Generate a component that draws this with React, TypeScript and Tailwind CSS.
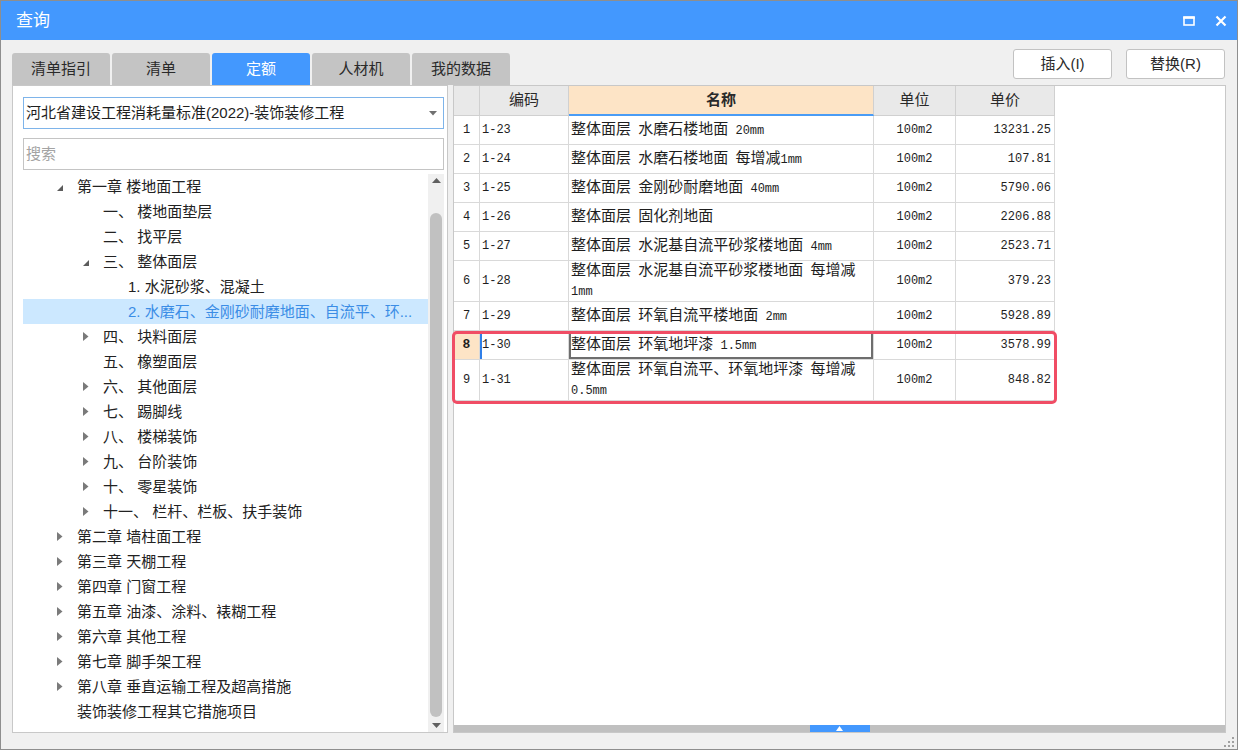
import React from 'react'

type TreeItem = { lvl: number; exp: 'open' | 'closed' | 'none'; text: string; sel?: boolean }

const tree: TreeItem[] = [
  { lvl: 0, exp: 'open', text: '第一章 楼地面工程' },
  { lvl: 1, exp: 'none', text: '一、 楼地面垫层' },
  { lvl: 1, exp: 'none', text: '二、 找平层' },
  { lvl: 1, exp: 'open', text: '三、 整体面层' },
  { lvl: 2, exp: 'none', text: '1. 水泥砂浆、混凝土' },
  { lvl: 2, exp: 'none', text: '2. 水磨石、金刚砂耐磨地面、自流平、环...', sel: true },
  { lvl: 1, exp: 'closed', text: '四、 块料面层' },
  { lvl: 1, exp: 'none', text: '五、 橡塑面层' },
  { lvl: 1, exp: 'closed', text: '六、 其他面层' },
  { lvl: 1, exp: 'closed', text: '七、 踢脚线' },
  { lvl: 1, exp: 'closed', text: '八、 楼梯装饰' },
  { lvl: 1, exp: 'closed', text: '九、 台阶装饰' },
  { lvl: 1, exp: 'closed', text: '十、 零星装饰' },
  { lvl: 1, exp: 'closed', text: '十一、 栏杆、栏板、扶手装饰' },
  { lvl: 0, exp: 'closed', text: '第二章 墙柱面工程' },
  { lvl: 0, exp: 'closed', text: '第三章 天棚工程' },
  { lvl: 0, exp: 'closed', text: '第四章 门窗工程' },
  { lvl: 0, exp: 'closed', text: '第五章 油漆、涂料、裱糊工程' },
  { lvl: 0, exp: 'closed', text: '第六章 其他工程' },
  { lvl: 0, exp: 'closed', text: '第七章 脚手架工程' },
  { lvl: 0, exp: 'closed', text: '第八章 垂直运输工程及超高措施' },
  { lvl: 0, exp: 'none', text: '装饰装修工程其它措施项目' },
]

const indent = ['pl-[33px]', 'pl-[59px]', 'pl-[84px]']

type Row = { n: number; code: string; name: string[]; unit: string; price: string }

const rows: Row[] = [
  { n: 1, code: '1-23', name: ['整体面层 水磨石楼地面 20mm'], unit: '100m2', price: '13231.25' },
  { n: 2, code: '1-24', name: ['整体面层 水磨石楼地面 每增减1mm'], unit: '100m2', price: '107.81' },
  { n: 3, code: '1-25', name: ['整体面层 金刚砂耐磨地面 40mm'], unit: '100m2', price: '5790.06' },
  { n: 4, code: '1-26', name: ['整体面层 固化剂地面'], unit: '100m2', price: '2206.88' },
  { n: 5, code: '1-27', name: ['整体面层 水泥基自流平砂浆楼地面 4mm'], unit: '100m2', price: '2523.71' },
  { n: 6, code: '1-28', name: ['整体面层 水泥基自流平砂浆楼地面 每增减', '1mm'], unit: '100m2', price: '379.23' },
  { n: 7, code: '1-29', name: ['整体面层 环氧自流平楼地面 2mm'], unit: '100m2', price: '5928.89' },
  { n: 8, code: '1-30', name: ['整体面层 环氧地坪漆 1.5mm'], unit: '100m2', price: '3578.99' },
  { n: 9, code: '1-31', name: ['整体面层 环氧自流平、环氧地坪漆 每增减', '0.5mm'], unit: '100m2', price: '848.82' },
]

const mono = "font-['Liberation_Mono','Noto_Sans_CJK_SC',monospace] text-[12px]"

// ascii runs go in the narrow mono face, like the original SimSun digits
function Mixed({ s }: { s: string }) {
  return (
    <>
      {s
        .split(/([\x20-\x7e]+)/)
        .filter(Boolean)
        .map((p, i) =>
          /^[\x20-\x7e]+$/.test(p) ? (
            <span key={i} className={`${mono} whitespace-pre`}>
              {p}
            </span>
          ) : (
            <span key={i}>{p}</span>
          )
        )}
    </>
  )
}

function Arrow({ exp }: { exp: TreeItem['exp'] }) {
  if (exp === 'open')
    return (
      <svg width="8" height="8" viewBox="0 0 8 8" className="mt-[2px]">
        <polygon points="7,1 7,7 1,7" fill="#5c5c5c" />
      </svg>
    )
  if (exp === 'closed')
    return (
      <svg width="6" height="9" viewBox="0 0 6 9" className="ml-[1px]">
        <polygon points="0,0 5.5,4.5 0,9" fill="#7a7a7a" />
      </svg>
    )
  return null
}

function TableRow({ r }: { r: Row }) {
  const two = r.name.length > 1
  const cur = r.n === 8
  const h = two ? 'h-[41px]' : 'h-[29px]'
  return (
    <div className={`grid grid-cols-[26px_89px_305px_82px_99px] ${h} text-[#1e1e1e]`}>
      <div
        className={`flex items-center justify-center border-r border-b border-[#d9d9d9] ${mono} ${
          cur ? 'bg-[#fde4c6] font-bold text-[13px]' : ''
        }`}
      >
        {r.n}
      </div>
      <div
        className={`flex items-center pl-[2px] border-r border-b border-[#d9d9d9] ${mono} ${
          cur ? 'shadow-[inset_2px_0_0_#2f7fe8]' : ''
        }`}
      >
        {r.code}
      </div>
      <div
        className={`flex flex-col justify-center pl-[2px] border-r border-b border-[#d9d9d9] text-[15px] leading-[17px] ${
          cur ? 'ring-2 ring-inset ring-[#6e6e6e]' : ''
        }`}
      >
        {r.name.map((l, i) => (
          <div key={i} className="whitespace-nowrap">
            <Mixed s={l} />
          </div>
        ))}
      </div>
      <div className={`flex items-center justify-center border-r border-b border-[#d9d9d9] ${mono}`}>{r.unit}</div>
      <div className={`flex items-center justify-end pr-[3px] border-r border-b border-[#d9d9d9] ${mono}`}>
        {r.price}
      </div>
    </div>
  )
}

export default function App() {
  return (
    <div className="w-[1238px] h-[750px] flex flex-col border border-[#8e8e8e] bg-[#f0f0f0] overflow-hidden font-['Liberation_Sans','Noto_Sans_CJK_SC',sans-serif] text-[#222]">
      {/* title bar */}
      <div className="h-[39px] shrink-0 bg-[#4398fe] flex items-center justify-between pl-[15px] pr-[10px]">
        <span className="text-white text-[17px]">查询</span>
        <div className="flex items-center gap-[20px]">
          <svg width="12" height="10" viewBox="0 0 12 10">
            <rect x="1" y="1.5" width="10" height="7.5" fill="none" stroke="#fff" strokeWidth="1.6" />
            <rect x="0.2" y="0.2" width="11.6" height="2.6" fill="#fff" />
          </svg>
          <svg width="12" height="12" viewBox="0 0 12 12">
            <path d="M1.5 1.5 L10.5 10.5 M10.5 1.5 L1.5 10.5" stroke="#fff" strokeWidth="2.2" />
          </svg>
        </div>
      </div>

      {/* tabs + buttons */}
      <div className="h-[45px] shrink-0 flex justify-between pl-[11px] pr-[12px] pt-[9px]">
        <div className="flex items-end gap-[2px] self-end">
          {['清单指引', '清单', '定额', '人材机', '我的数据'].map((t) => (
            <div
              key={t}
              className={`w-[98px] h-[32px] rounded-t-[3px] flex items-center justify-center text-[15px] ${
                t === '定额' ? 'bg-[#4398fe] text-white' : 'bg-[#c4c4c4] text-[#2a2a2a]'
              }`}
            >
              {t}
            </div>
          ))}
        </div>
        <div className="flex gap-[14px]">
          {['插入(I)', '替换(R)'].map((b) => (
            <button
              key={b}
              className="w-[99px] h-[30px] bg-white border border-[#c2c2c2] rounded-[3px] text-[15px] text-[#2a2a2a]"
            >
              {b}
            </button>
          ))}
        </div>
      </div>

      {/* panels */}
      <div className="h-[648px] shrink-0 flex gap-[5px] px-[11px]">
        {/* left tree panel */}
        <div className="w-[436px] border border-[#c8c8c8] bg-white flex flex-col pt-[11px] pl-[10px] pr-[3px]">
          <div className="h-[32px] shrink-0 border border-[#7eb4ea] flex items-center justify-between pl-[2px] pr-[6px] text-[15px] text-[#1e1e1e]">
            <span>河北省建设工程消耗量标准(2022)-装饰装修工程</span>
            <svg width="8" height="5" viewBox="0 0 8 5">
              <polygon points="0,0 8,0 4,4.5" fill="#707070" />
            </svg>
          </div>
          <div className="h-[32px] shrink-0 mt-[9px] border border-[#c4c4c4] flex items-center pl-[2px] text-[15px] text-[#a3a3a3]">
            搜索
          </div>
          <div className="flex-1 min-h-0 mt-[4px] flex">
            <div className="flex-1 overflow-hidden">
              {tree.map((t, i) => (
                <div
                  key={i}
                  className={`h-[25px] flex items-center ${indent[t.lvl]} ${
                    t.sel ? 'bg-[#cce8ff] text-[#3b8de6]' : ''
                  }`}
                >
                  <div className="w-[21px] shrink-0 flex items-center">
                    <Arrow exp={t.exp} />
                  </div>
                  <span className="text-[15px] leading-[25px] whitespace-pre">{t.text}</span>
                </div>
              ))}
            </div>
            <div className="w-[16px] shrink-0 bg-[#f0f0f0] flex flex-col items-center">
              <div className="h-[12px] flex items-center">
                <svg width="9" height="5" viewBox="0 0 9 5">
                  <polygon points="0,5 9,5 4.5,0" fill="#606060" />
                </svg>
              </div>
              <div className="mt-[27px] w-[12px] h-[504px] rounded-full bg-[#c1c1c1]" />
              <div className="mt-[2px] h-[12px] flex items-center">
                <svg width="9" height="5" viewBox="0 0 9 5">
                  <polygon points="0,0 9,0 4.5,5" fill="#606060" />
                </svg>
              </div>
            </div>
          </div>
        </div>

        {/* right table panel */}
        <div className="flex-1 border border-[#c8c8c8] bg-white flex flex-col">
          <div className="grid grid-cols-[26px_89px_305px_82px_99px] h-[30px] text-[15px] text-[#2a2a2a]">
            <div className="bg-[#e9e9e9] border-r border-b border-[#d0d0d0]" />
            <div className="bg-[#e9e9e9] border-r border-b border-[#d0d0d0] flex items-center justify-center">编码</div>
            <div className="bg-[#fde4c6] border-r border-b-2 border-r-[#d0d0d0] border-b-[#4a9cf5] flex items-center justify-center font-bold">
              名称
            </div>
            <div className="bg-[#e9e9e9] border-r border-b border-[#d0d0d0] flex items-center justify-center">单位</div>
            <div className="bg-[#e9e9e9] border-r border-b border-[#d0d0d0] flex items-center justify-center">单价</div>
          </div>
          {rows.slice(0, 7).map((r) => (
            <TableRow key={r.n} r={r} />
          ))}
          <div className="relative w-[601px]">
            {rows.slice(7).map((r) => (
              <TableRow key={r.n} r={r} />
            ))}
            <div className="absolute -left-[2px] -right-[2px] top-0 -bottom-[3px] border-[3px] border-[#f04d65] rounded-[5px] pointer-events-none" />
          </div>
          <div className="flex-1" />
          <div className="h-[7px] bg-[#c0c0c0] flex justify-center">
            <div className="w-[60px] h-full bg-[#4398fe] flex items-center justify-center">
              <svg width="7" height="5" viewBox="0 0 7 5">
                <polygon points="0,5 7,5 3.5,0" fill="#fff" />
              </svg>
            </div>
          </div>
        </div>
      </div>

      {/* bottom strip with resize grip */}
      <div className="flex-1 flex justify-end items-end pr-[3px] pb-[2px]">
        <svg width="10" height="10" viewBox="0 0 10 10">
          {[
            [8, 0],
            [8, 4],
            [4, 4],
            [8, 8],
            [4, 8],
            [0, 8],
          ].map(([x, y], i) => (
            <rect key={i} x={x} y={y} width="2" height="2" fill="#a0a0a0" />
          ))}
        </svg>
      </div>
    </div>
  )
}
